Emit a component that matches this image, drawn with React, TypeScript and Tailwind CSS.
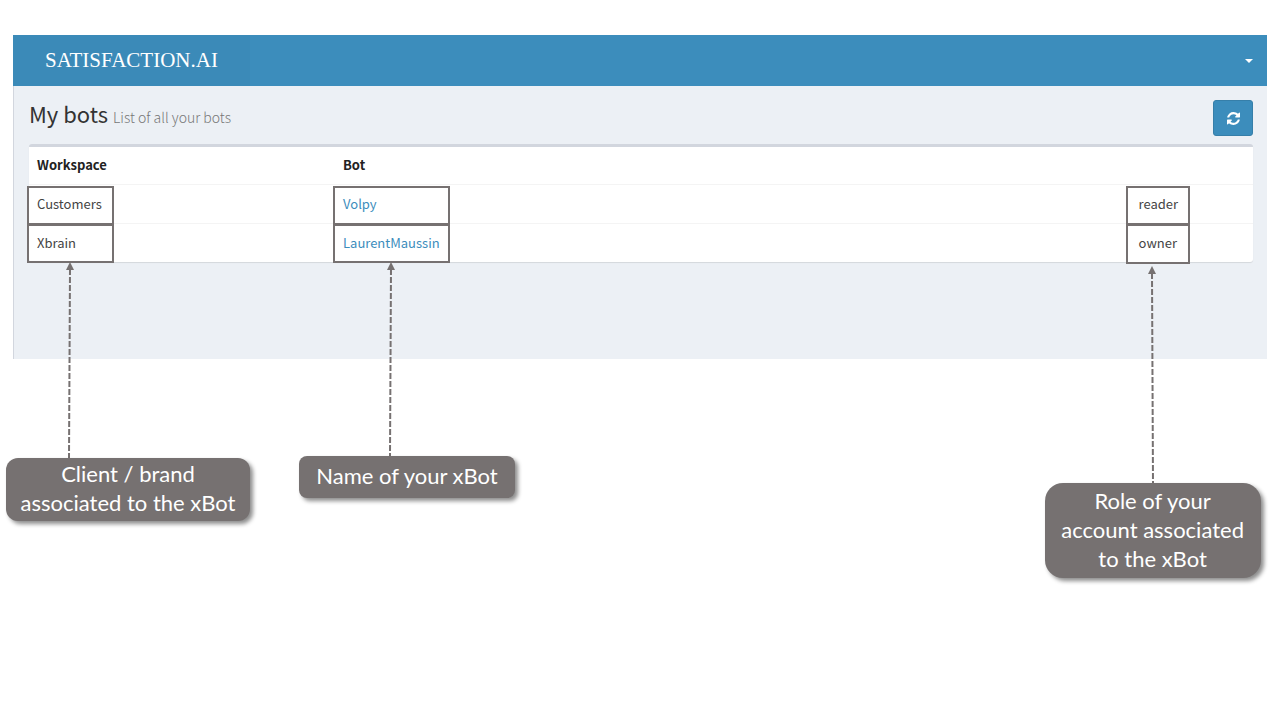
import type { ReactNode } from 'react';

function RefreshIcon() {
  return (
    <svg viewBox="0 0 1536 1536" className="h-[13px] w-[13px]" fill="currentColor" aria-hidden="true">
      <path d="M1511 928q0 5-1 7-64 268-268 434.500t-478 166.500q-146 0-282.500-55t-243.500-157l-129 129q-19 19-45 19t-45-19-19-45v-448q0-26 19-45t45-19h448q26 0 45 19t19 45-19 45l-137 137q71 66 161 102t187 36q134 0 250-65t186-179q11-17 53-117 8-23 30-23h192q13 0 22.500 9.500t9.500 22.500zm25-800v448q0 26-19 45t-45 19h-448q-26 0-45-19t-19-45 19-45l138-138q-148-137-349-137-134 0-250 65t-186 179q-11 17-53 117-8 23-30 23h-199q-13 0-22.500-9.500t-9.500-22.500v-7q65-268 270-434.500t480-166.500q146 0 284 55.500t245 156.500l130-129q19-19 45-19t45 19 19 45z" />
    </svg>
  );
}

function Highlight({ className }: { className: string }) {
  return <span className={`pointer-events-none absolute border-2 border-[#767171] ${className}`} />;
}

function Arrow({ height, drift, className }: { height: number; drift: number; className: string }) {
  return (
    <svg width="12" height={height} className={`absolute ${className}`} aria-hidden="true">
      <line x1="6" y1="7" x2={6 + drift} y2={height} stroke="#767171" strokeWidth="2" strokeDasharray="6 2" />
      <path d="M6 0 L10 8 H2 Z" fill="#767171" />
    </svg>
  );
}

function Callout({ className, children }: { className: string; children: ReactNode }) {
  return (
    <div
      className={`absolute flex items-center justify-center bg-[#767171] pb-0.5 text-center font-['Lato','Liberation_Sans',sans-serif] text-[22px] leading-[29px] whitespace-nowrap text-white shadow-[3px_3px_4px_rgba(0,0,0,0.45)] ${className}`}
    >
      {children}
    </div>
  );
}

export default function App() {
  return (
    <div className="min-h-screen bg-white px-[13px] pt-[35px] font-['Noto_Sans_CJK_SC','Open_Sans',sans-serif] text-[#333333]">
      <header className="flex h-[51px] items-center justify-between bg-[#3c8dbc] text-white">
        <a
          href="#"
          className="flex h-full w-[237px] items-center bg-[#3b8ab8] pb-0.5 pl-8 font-['Liberation_Serif',serif] text-[21px] leading-[48px]"
        >
          SATISFACTION.AI
        </a>
        <button type="button" aria-label="Account menu" className="flex h-full w-9 items-center justify-center">
          <svg width="8" height="4" viewBox="0 0 8 4" fill="currentColor" aria-hidden="true">
            <path d="M0 0 H8 L4 4 Z" />
          </svg>
        </button>
      </header>

      <main className="h-[273px] border-l border-[#d2d6de] bg-[#ecf0f5] pr-[14px] pl-[15px]">
        <div className="flex h-[58px] items-end justify-between pb-2">
          <h1 className="text-[22px] leading-[38px] whitespace-nowrap">
            My bots <small className="text-[14px] font-light text-[#777777]">List of all your bots</small>
          </h1>
          <button
            type="button"
            aria-label="Refresh"
            className="flex h-9 w-10 items-center justify-center rounded-[3px] border border-[#367fa9] bg-[#3c8dbc] text-white"
          >
            <RefreshIcon />
          </button>
        </div>

        <div className="rounded-[3px] border-t-[3px] border-[#d2d6de] bg-white shadow-[0_1px_1px_rgba(0,0,0,0.1)]">
          <table className="w-full table-fixed border-collapse text-left text-[13px] leading-[20px]">
            <colgroup>
              <col className="w-[25%]" />
              <col className="w-[65%]" />
              <col className="w-[10%]" />
            </colgroup>
            <thead>
              <tr className="h-[37px] border-b border-[#f4f4f4] text-[#222222]">
                <th className="px-2 font-bold">Workspace</th>
                <th className="px-2 font-bold">Bot</th>
                <th aria-label="Role" />
              </tr>
            </thead>
            <tbody className="text-[#444444]">
              <tr className="h-[39px] border-b border-[#f4f4f4]">
                <td className="relative px-2">
                  Customers
                  <Highlight className="top-px -left-0.5 h-[39px] w-[87px]" />
                </td>
                <td className="relative px-2">
                  <a href="#volpy" className="text-[#3c8dbc]">Volpy</a>
                  <Highlight className="top-px -left-0.5 h-[39px] w-[117px]" />
                </td>
                <td className="relative px-2">
                  reader
                  <Highlight className="top-px -left-[5px] h-[39px] w-16" />
                </td>
              </tr>
              <tr className="h-[39px]">
                <td className="relative px-2">
                  Xbrain
                  <Highlight className="top-0 -left-0.5 h-[39px] w-[87px]" />
                  <Arrow height={196} drift={-1} className="top-[38px] left-[35px]" />
                  <Callout className="top-[234px] -left-[23px] h-[63px] w-[244px] rounded-[12px]">
                    Client / brand
                    <br />
                    associated to the xBot
                  </Callout>
                </td>
                <td className="relative px-2">
                  <a href="#laurent" className="text-[#3c8dbc]">LaurentMaussin</a>
                  <Highlight className="top-0 -left-0.5 h-[39px] w-[117px]" />
                  <Arrow height={194} drift={-1} className="top-[38px] left-[50px]" />
                  <Callout className="top-[232px] -left-9 h-[42px] w-[216px] rounded-[8px]">
                    Name of your xBot
                  </Callout>
                </td>
                <td className="relative px-2">
                  owner
                  <Highlight className="top-0 -left-[5px] h-10 w-16" />
                  <Arrow height={218} drift={1} className="top-[42px] left-[15px]" />
                  <Callout className="top-[259px] -left-[86px] h-[95px] w-[216px] rounded-[18px]">
                    Role of your
                    <br />
                    account associated
                    <br />
                    to the xBot
                  </Callout>
                </td>
              </tr>
            </tbody>
          </table>
        </div>
      </main>
    </div>
  );
}
